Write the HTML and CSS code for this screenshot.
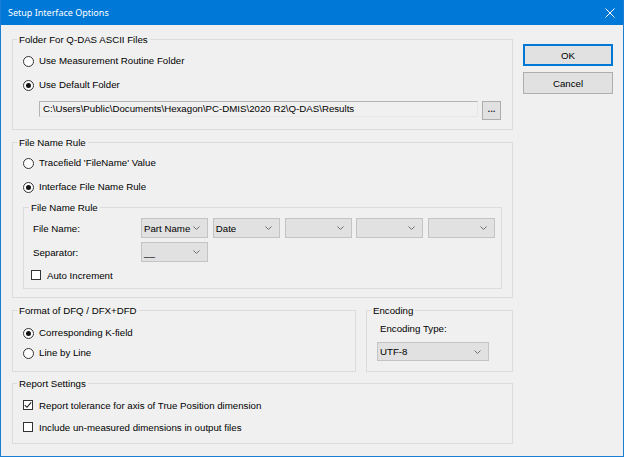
FILE: index.html
```html
<!DOCTYPE html>
<html>
<head>
<meta charset="utf-8">
<link rel="stylesheet" href="styles.css">
</head>
<body>
<div class="window">
  <header class="titlebar">
    <span class="title">Setup Interface Options</span>
    <svg class="close" width="10" height="10" viewBox="0 0 10 10"><path d="M0.5 0.5L9.5 9.5M9.5 0.5L0.5 9.5" stroke="#fff" stroke-width="1" fill="none"/></svg>
  </header>
  <div class="client">
    <div class="groups">
      <fieldset class="group g-folder">
        <legend>Folder For Q-DAS ASCII Files</legend>
        <div class="opt first"><span class="radio"></span><span>Use Measurement Routine Folder</span></div>
        <div class="opt"><span class="radio on"></span><span>Use Default Folder</span></div>
        <div class="path-row">
          <div class="path">C:\Users\Public\Documents\Hexagon\PC-DMIS\2020 R2\Q-DAS\Results</div>
          <div class="browse">...</div>
        </div>
      </fieldset>

      <fieldset class="group g-rule">
        <legend>File Name Rule</legend>
        <div class="opt first"><span class="radio"></span><span>Tracefield 'FileName' Value</span></div>
        <div class="opt"><span class="radio on"></span><span>Interface File Name Rule</span></div>
        <fieldset class="group inner">
          <legend>File Name Rule</legend>
          <div class="field-row first">
            <span class="field-label">File Name:</span>
            <div class="combos">
              <div class="combo"><span>Part Name</span><svg class="chev" width="7" height="4" viewBox="0 0 7 4"><path d="M0.5 0.5L3.5 3.5L6.5 0.5" stroke="#707070" fill="none"/></svg></div>
              <div class="combo"><span>Date</span><svg class="chev" width="7" height="4" viewBox="0 0 7 4"><path d="M0.5 0.5L3.5 3.5L6.5 0.5" stroke="#707070" fill="none"/></svg></div>
              <div class="combo"><span></span><svg class="chev" width="7" height="4" viewBox="0 0 7 4"><path d="M0.5 0.5L3.5 3.5L6.5 0.5" stroke="#707070" fill="none"/></svg></div>
              <div class="combo"><span></span><svg class="chev" width="7" height="4" viewBox="0 0 7 4"><path d="M0.5 0.5L3.5 3.5L6.5 0.5" stroke="#707070" fill="none"/></svg></div>
              <div class="combo"><span></span><svg class="chev" width="7" height="4" viewBox="0 0 7 4"><path d="M0.5 0.5L3.5 3.5L6.5 0.5" stroke="#707070" fill="none"/></svg></div>
            </div>
          </div>
          <div class="field-row">
            <span class="field-label">Separator:</span>
            <div class="combo"><span class="sep">__</span><svg class="chev" width="7" height="4" viewBox="0 0 7 4"><path d="M0.5 0.5L3.5 3.5L6.5 0.5" stroke="#707070" fill="none"/></svg></div>
          </div>
          <div class="check-row auto"><span class="check"></span><span>Auto Increment</span></div>
        </fieldset>
      </fieldset>

      <div class="pair">
        <fieldset class="group g-format">
          <legend>Format of DFQ / DFX+DFD</legend>
          <div class="opt first"><span class="radio on"></span><span>Corresponding K-field</span></div>
          <div class="opt"><span class="radio"></span><span>Line by Line</span></div>
        </fieldset>
        <fieldset class="group g-enc">
          <legend>Encoding</legend>
          <div class="enc-label">Encoding Type:</div>
          <div class="combo enc-combo"><span>UTF-8</span><svg class="chev" width="7" height="4" viewBox="0 0 7 4"><path d="M0.5 0.5L3.5 3.5L6.5 0.5" stroke="#707070" fill="none"/></svg></div>
        </fieldset>
      </div>

      <fieldset class="group g-report">
        <legend>Report Settings</legend>
        <div class="check-row first"><span class="check"><svg width="8" height="8" viewBox="0 0 8 8"><path d="M0.8 4.2L3 6.3L7.2 1.3" stroke="#222" stroke-width="1.1" fill="none"/></svg></span><span>Report tolerance for axis of True Position dimension</span></div>
        <div class="check-row"><span class="check"></span><span>Include un-measured dimensions in output files</span></div>
      </fieldset>
    </div>
    <div class="buttons">
      <div class="btn default">OK</div>
      <div class="btn">Cancel</div>
    </div>
  </div>
</div>
</body>
</html>
```

FILE: styles.css
```css
* { box-sizing: border-box; }
html, body { margin: 0; padding: 0; }
body {
  font-family: "Liberation Sans", Arial, sans-serif;
  font-size: 9.7px;
  color: #000;
  background: #f0f0f0;
}
.window {
  width: 624px;
  height: 457px;
  border: 1px solid #1a7fd4;
  border-top: 0;
  background: #f0f0f0;
  display: flex;
  flex-direction: column;
  overflow: hidden;
}
.titlebar {
  height: 25px;
  flex: none;
  background: #0078d7;
  color: #fff;
  display: flex;
  align-items: center;
  justify-content: space-between;
  padding: 0 8px 0 7px;
}
.title {
  font-family: "Noto Sans", "Open Sans", sans-serif;
  font-size: 9px;
}
.close { display: block; }
.client {
  flex: 1;
  display: flex;
  gap: 10px;
  padding: 8px 10px 0 11px;
}
.groups {
  width: 501px;
  display: flex;
  flex-direction: column;
}
.buttons {
  width: 90px;
  display: flex;
  flex-direction: column;
  gap: 6px;
  padding-top: 11px;
}
.btn {
  height: 22px;
  background: #e1e1e1;
  border: 1px solid #adadad;
  display: flex;
  align-items: center;
  justify-content: center;
}
.btn.default {
  border: 1px solid #0078d7;
  box-shadow: inset 0 0 0 1px #0078d7;
}

.group {
  margin: 0;
  padding: 0;
  border: 1px solid #dcdcdc;
  min-width: 0;
}
.group legend {
  padding: 0 2px;
  margin-left: 4px;
  line-height: 13px;
}
.opt {
  height: 20px;
  display: flex;
  align-items: center;
  gap: 5px;
  margin-left: 10px;
  line-height: 12px;
}
.radio {
  width: 11px;
  height: 11px;
  border: 1px solid #333;
  border-radius: 50%;
  background: #fff;
  flex: none;
  display: flex;
  align-items: center;
  justify-content: center;
}
.radio.on::after {
  content: "";
  width: 5px;
  height: 5px;
  border-radius: 50%;
  background: #111;
}
.check {
  width: 10px;
  height: 10px;
  border: 1px solid #333;
  background: #fff;
  flex: none;
  display: flex;
  align-items: center;
  justify-content: center;
}
.check svg { display: block; }
.check-row {
  height: 16px;
  display: flex;
  align-items: center;
  gap: 6px;
  margin-left: 10px;
}

/* folder group */
.g-folder { padding-bottom: 9px; }
.g-folder .opt.first { margin-top: 5px; }
.g-folder .opt + .opt { margin-top: 4px; }
.path-row {
  margin-top: 6px;
  margin-left: 26px;
  display: flex;
  align-items: flex-start;
  gap: 4px;
}
.path {
  width: 439px;
  height: 16px;
  border: 1px solid #b4b4b4;
  border-right-color: #e6e6e6;
  border-bottom-color: #e6e6e6;
  background: #f0f0f0;
  padding-left: 3px;
  line-height: 14px;
  white-space: nowrap;
  overflow: hidden;
}
.browse {
  width: 19px;
  height: 19px;
  background: #e1e1e1;
  border: 1px solid #adadad;
  text-align: center;
  line-height: 13px;
  font-weight: bold;
  color: #333;
}

/* file name rule group */
.g-rule { margin-top: 6px; padding-bottom: 8px; }
.g-rule > .opt.first { margin-top: 4px; }
.g-rule > .opt + .opt { margin-top: 4px; }
.inner {
  margin: 4px 10px 0 10px;
  padding-bottom: 5px;
}
.inner legend { margin-left: 5px; }
.field-row {
  height: 20px;
  display: flex;
  align-items: center;
  margin-left: 9px;
  margin-top: 4px;
}
.field-label { width: 108px; flex: none; }
.combos { display: flex; gap: 4.75px; }
.combo {
  width: 67px;
  height: 20px;
  background: #e1e1e1;
  border: 1px solid #c4c4c4;
  display: flex;
  align-items: center;
  justify-content: space-between;
  padding: 0 7px 0 2px;
  flex: none;
  white-space: nowrap;
}
.combo .chev { display: block; flex: none; }
.check-row.auto { margin-top: 5px; margin-left: 7px; }

/* pair */
.pair {
  margin-top: 6px;
  display: flex;
  gap: 10px;
}
.g-format { width: 344px; padding-bottom: 7px; flex: none; }
.g-format .opt.first { margin-top: 6px; }
.g-enc { flex: 1; padding-bottom: 10px; }
.enc-label {
  margin-top: 5px;
  margin-left: 13px;
  height: 14px;
  line-height: 14px;
}
.enc-combo {
  margin-top: 6px;
  margin-left: 10px;
  width: 112px;
  height: 19px;
}

/* report */
.g-report { margin-top: 5px; padding-bottom: 8px; }
.g-report .check-row.first { margin-top: 7px; }
.g-report .check-row + .check-row { margin-top: 6px; }
```
